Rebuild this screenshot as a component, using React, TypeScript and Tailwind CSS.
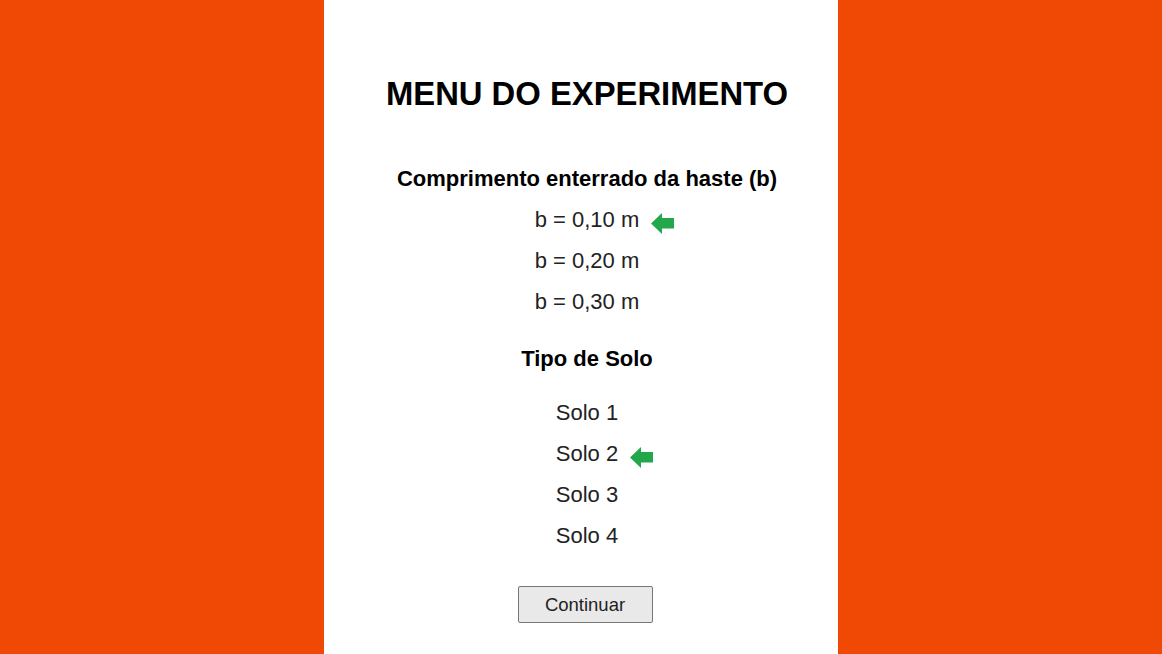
import React from 'react';

function GreenArrow() {
    return (
        <svg width="23" height="21" viewBox="0 0 23 21" className="absolute left-full top-1/2 ml-[12px] -mt-[7px]">
            <path d="M0 10.5 L11 0 L11 5 L23 5 L23 15.5 L11 15.5 L11 21 Z" fill="#22a84a" />
        </svg>
    );
}

const bRows = ['b = 0,10 m', 'b = 0,20 m', 'b = 0,30 m'];
const soloRows = ['Solo 1', 'Solo 2', 'Solo 3', 'Solo 4'];

export default function App() {
    const selectedB = 0;
    const selectedSolo = 1;

    return (
        <div className="w-[1162px] h-[654px] bg-[#f04805] flex justify-center overflow-hidden font-['Liberation_Sans',Arial,sans-serif]">
            <div className="w-[514px] h-full bg-white flex flex-col items-center pl-[12px] pt-[74px] text-[#222]">
                <h1 className="h-[40px] leading-[40px] text-[32.8px] font-bold text-black">MENU DO EXPERIMENTO</h1>

                <h2 className="mt-[44px] h-[41px] leading-[41px] text-[22px] font-bold text-black">
                    Comprimento enterrado da haste (b)
                </h2>
                <div className="flex flex-col items-center">
                    {bRows.map((label, i) => (
                        <div key={label} className="relative h-[41px] leading-[41px] text-[22px]">
                            {label}
                            {i === selectedB && <GreenArrow />}
                        </div>
                    ))}
                </div>

                <h2 className="mt-[16px] h-[41px] leading-[41px] text-[22px] font-bold text-black">Tipo de Solo</h2>
                <div className="mt-[13px] flex flex-col items-center">
                    {soloRows.map((label, i) => (
                        <div key={label} className="relative h-[41px] leading-[41px] text-[22px]">
                            {label}
                            {i === selectedSolo && <GreenArrow />}
                        </div>
                    ))}
                </div>

                <button className="mt-[30px] w-[135px] h-[37px] bg-[#e9e9e9] border border-[#767676] rounded-[2px] text-[18.5px] text-[#222] -translate-x-[2px]">
                    Continuar
                </button>
            </div>
        </div>
    );
}
